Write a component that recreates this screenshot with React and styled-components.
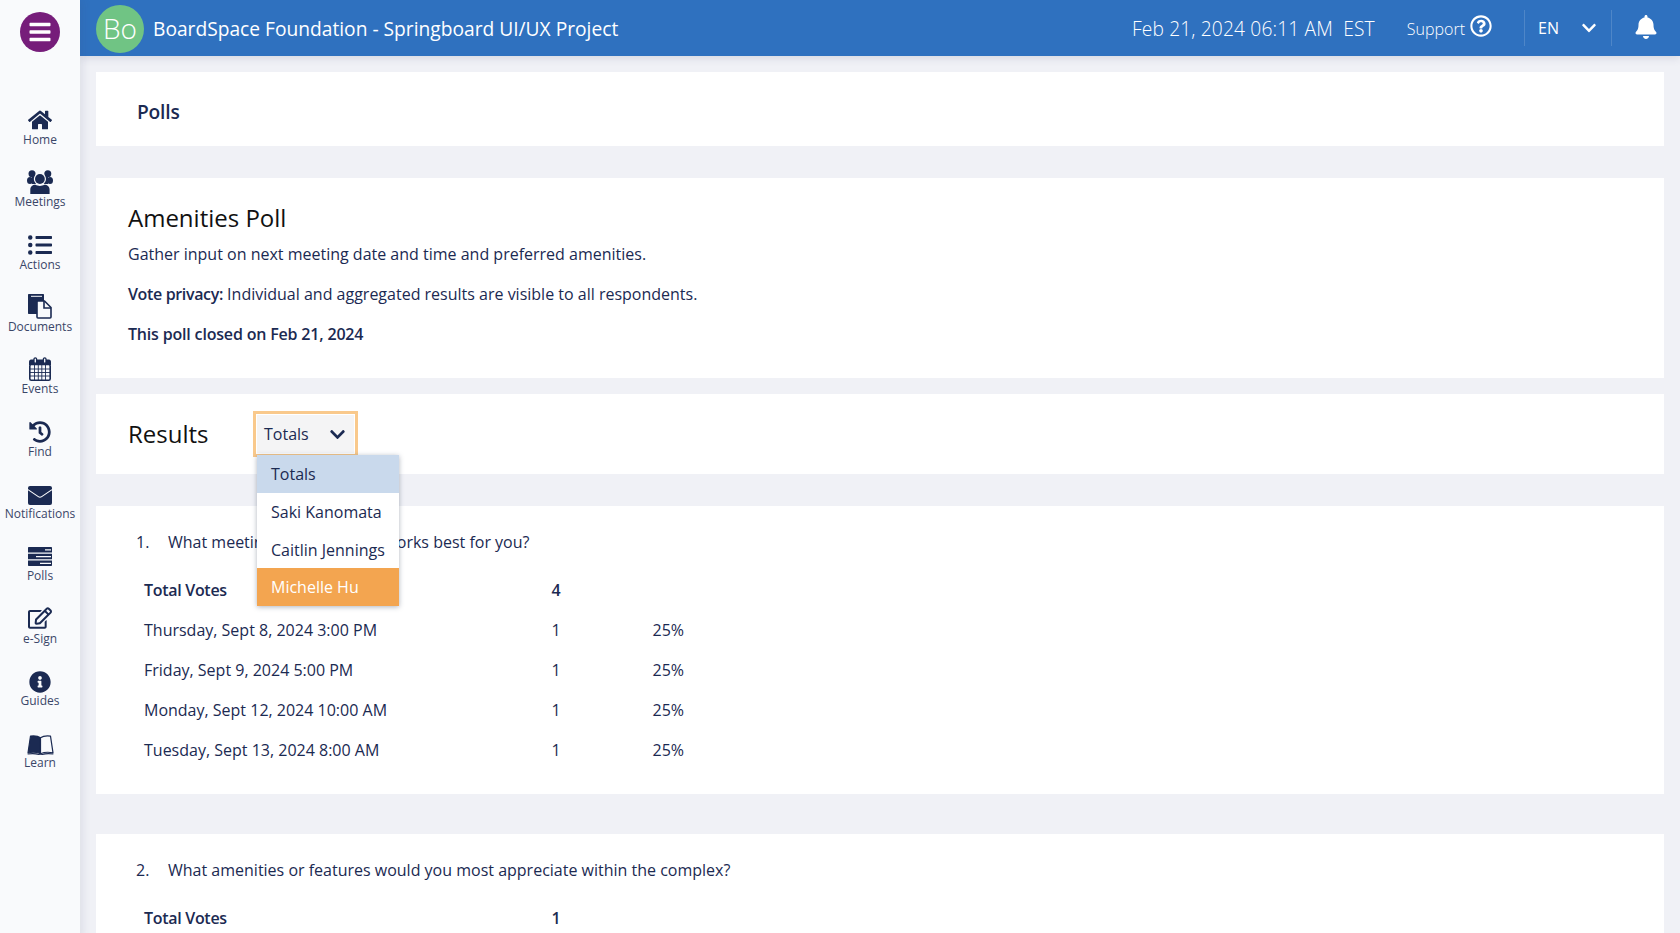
import React from "react";
import styled, { createGlobalStyle } from "styled-components";
import {
  FaHome, FaListUl, FaHistory, FaRegEdit,
  FaInfoCircle, FaBell, FaChevronDown, FaBars, FaRegQuestionCircle,
} from "react-icons/fa";

const Global = createGlobalStyle`
  html, body { margin: 0; padding: 0; height: 933px; overflow: hidden; background: #f0f1f6; }
  body { font-family: "Open Sans", "Liberation Sans", sans-serif; color: #1b2a52; }
  * { box-sizing: border-box; }
`;

const Page = styled.div`
  display: grid;
  grid-template-columns: 80px 1fr;
  width: 1680px;
  height: 933px;
  overflow: hidden;
`;

const Sidebar = styled.nav`
  background: #f9fafc;
  box-shadow: 3px 0 8px rgba(60, 70, 110, 0.1);
  z-index: 3;
  display: flex;
  flex-direction: column;
  align-items: center;
  padding-top: 12px;
`;

const Burger = styled.button`
  width: 40px;
  height: 40px;
  border: 0;
  border-radius: 50%;
  background: #761d7a;
  color: #fff;
  display: flex;
  align-items: center;
  justify-content: center;
  padding: 0;
  margin-bottom: 56px;
  font-size: 24px;
`;

const NavItem = styled.a`
  height: 62.35px;
  width: 80px;
  display: flex;
  flex-direction: column;
  align-items: center;
  font-size: 12px;
  line-height: 16px;
  color: #3a4668;
`;

const IconBox = styled.span`
  height: 24px;
  display: flex;
  align-items: flex-end;
  justify-content: center;
  padding-bottom: ${(p) => p.$lift || 0}px;
  color: #1b2a52;
  svg { display: block; }
`;

const Column = styled.div`
  display: flex;
  flex-direction: column;
  min-width: 0;
`;

const Header = styled.header`
  height: 56px;
  flex: none;
  background: #2f71bf;
  color: #fff;
  box-shadow: 0 2px 8px rgba(60, 70, 110, 0.15);
  z-index: 2;
  display: flex;
  align-items: center;
  padding: 0 22px 0 16px;
`;

const Avatar = styled.div`
  width: 48px;
  height: 48px;
  border-radius: 50%;
  background: #70c484;
  font-size: 28px;
  font-weight: 300;
  display: flex;
  align-items: center;
  justify-content: center;
  margin: 1px 9px 0 0;
  padding-bottom: 1px;
`;

const OrgTitle = styled.div`
  font-size: 19.2px;
  flex: 1;
  padding-top: 1px;
`;

const DateText = styled.div`
  font-size: 19.2px;
  font-weight: 300;
  white-space: pre;
  margin-right: 32px;
  letter-spacing: 0.15px;
`;

const Support = styled.div`
  font-size: 16px;
  font-weight: 300;
  display: flex;
  align-items: center;
  gap: 5px;
  margin-right: 32px;
  padding-top: 2px;
  svg { font-size: 22px; margin-top: -6px; }
`;

const Lang = styled.div`
  height: 36px;
  width: 88px;
  border-left: 1px solid rgba(255, 255, 255, 0.15);
  border-right: 1px solid rgba(255, 255, 255, 0.15);
  display: flex;
  align-items: center;
  justify-content: space-between;
  padding: 0 14px 0 13px;
  font-size: 16px;
  margin-right: 22px;
  svg { font-size: 16px; }
`;

const Bell = styled.div`
  display: flex;
  font-size: 24px;
  margin-top: -2px;
`;

const Main = styled.main`
  flex: 1;
  padding: 16px 16px 0;
  display: flex;
  flex-direction: column;
  min-height: 0;
`;

const Card = styled.section`
  background: #fff;
  flex: none;
  margin-bottom: ${(p) => p.$gap}px;
  height: ${(p) => (p.$height ? `${p.$height}px` : "auto")};
  padding: ${(p) => p.$pad};
`;

const PageTitle = styled.h1`
  margin: 0;
  font-size: 19.2px;
  line-height: 28px;
  font-weight: 600;
  letter-spacing: -0.2px;
  color: #1b2a52;
`;

const PollTitle = styled.h2`
  margin: 0 0 7px;
  font-size: 24px;
  line-height: 34px;
  font-weight: 400;
  color: #111;
`;

const Para = styled.p`
  margin: 0 0 16px;
  font-size: 16px;
  line-height: 24px;
  font-weight: ${(p) => (p.$strong ? 600 : 400)};
  letter-spacing: ${(p) => (p.$strong ? "-0.18px" : "normal")};
  b { font-weight: 600; letter-spacing: -0.35px; }
`;

const ResultsRow = styled.div`
  display: flex;
  align-items: center;
  height: 100%;
`;

const ResultsTitle = styled.h2`
  margin: 0;
  width: 125px;
  padding-bottom: 2px;
  font-size: 24px;
  font-weight: 400;
  color: #111;
`;

const SelectWrap = styled.div`
  position: relative;
`;

const SelectBox = styled.div`
  width: 105px;
  height: 46px;
  border: 3px solid #f9c98c;
  outline: 1px solid #fff;
  outline-offset: -4px;
  background: #f4f4f5;
  display: flex;
  align-items: center;
  justify-content: space-between;
  padding: 0 9px 0 8px;
  font-size: 16px;
  svg { font-size: 17px; }
`;

const Menu = styled.ul`
  position: absolute;
  top: 44px;
  left: 4px;
  width: 142px;
  margin: 0;
  padding: 0;
  list-style: none;
  background: #fff;
  box-shadow: 0 1px 5px rgba(30, 40, 70, 0.35);
  z-index: 5;
`;

const MenuItem = styled.li`
  height: 37.75px;
  line-height: 38.5px;
  padding-left: 14px;
  font-size: 16px;
  white-space: nowrap;
  background: ${(p) => (p.$active ? "#c9d9ec" : p.$hover ? "#f3a550" : "#fff")};
  color: ${(p) => (p.$hover ? "#fff" : "#1b2a52")};
`;

const Question = styled.div`
  display: flex;
  font-size: 16px;
  line-height: 24px;
  padding-left: 40px;
  margin-bottom: 16px;
`;

const QNum = styled.span`
  width: 32px;
  flex: none;
`;

const Row = styled.div`
  display: grid;
  grid-template-columns: 400px 24px 84.5px 60px;
  height: 40px;
  align-items: center;
  padding-left: 48px;
  font-size: 16px;
  font-weight: ${(p) => (p.$strong ? 600 : 400)};
  letter-spacing: ${(p) => (p.$strong ? "-0.3px" : "normal")};
`;

const Num = styled.span`
  text-align: center;
`;

const Pct = styled.span`
  grid-column: 4;
`;

const Meetings = () => (
  <svg width="26" height="24" viewBox="0 0 26 24" fill="currentColor">
    <circle cx="5" cy="3.7" r="3.5" />
    <circle cx="20.8" cy="3.7" r="3.5" />
    <ellipse cx="3" cy="10.5" rx="3" ry="3.6" />
    <ellipse cx="23" cy="10.5" rx="3" ry="3.6" />
    <path d="M5 6h16v8H5z" />
    <circle cx="12.9" cy="9" r="6.1" fill="#f9fafc" />
    <circle cx="12.9" cy="9" r="4.9" />
    <path d="M3.3 24v-4.5C3.3 16.5 6 14.6 8.5 14.8c1.2.7 2.8 1.2 4.4 1.2s3.2-.5 4.4-1.2c2.5-.2 5.3 1.7 5.3 4.7V24z" />
  </svg>
);

const Documents = () => (
  <svg width="24" height="25" viewBox="0 0 24 25">
    <path d="M1 0h14c.6 0 1 .4 1 1v19H1c-.6 0-1-.4-1-1V1c0-.6.4-1 1-1z" fill="currentColor" />
    <path d="M3 1.8h11v1H3z" fill="#f9fafc" />
    <path d="M10 7h6.5l6.5 6.5V23c0 .6-.4 1-1 1H10c-.6 0-1-.4-1-1V8c0-.6.4-1 1-1z" fill="#f9fafc" stroke="currentColor" strokeWidth="1.6" />
    <path d="M16 7v7h7" fill="none" stroke="currentColor" strokeWidth="1.6" />
  </svg>
);

const Events = () => (
  <svg width="22" height="24" viewBox="0 0 22 24" fill="none" stroke="currentColor">
    <path d="M2 2.5h18c1 0 2 1 2 2V8H0V4.500c0-1 1-2 2-2z" fill="currentColor" stroke="none" />
    <rect x="5" y=".8" width="2.6" height="5.400" rx="1.300" fill="#f9fafc" strokeWidth="1.300" />
    <rect x="14.400" y=".8" width="2.600" height="5.400" rx="1.300" fill="#f9fafc" strokeWidth="1.300" />
    <rect x=".8" y="7.500" width="20.400" height="15.700" rx="1.500" strokeWidth="1.600" />
    <path d="M5.500 8v15M9.300 8v15M12.800 8v15M16.500 8v15M1 12h20M1 15.500h20M1 19h20" strokeWidth=".9" />
  </svg>
);

const Envelope = () => (
  <svg width="24" height="19" viewBox="0 0 24 19">
    <rect width="24" height="19" rx="2" fill="currentColor" />
    <path d="M0 3.600l10.300 7c1 .7 2.400.7 3.400 0l10.300-7" fill="none" stroke="#f9fafc" strokeWidth="1.100" />
  </svg>
);

const Polls = () => (
  <svg width="24" height="19" viewBox="0 0 24 19">
    <path d="M1 0h22c.6 0 1 .4 1 1v4.600H0V1c0-.6.4-1 1-1zM0 6.700h24v5.600H0zM0 13.400h24V18c0 .6-.4 1-1 1H1c-.6 0-1-.4-1-1z" fill="currentColor" />
    <path d="M17 2.300h6v1.300h-6zM8 9h15v1.300H8zM12 15.700h11V17H12z" fill="#f9fafc" />
  </svg>
);

const Learn = () => (
  <svg width="27" height="20" viewBox="0 0 27 20">
    <path d="M13.500 2.800C11 1 7.500.6 3.500 1.100L1 17.800c4-.8 9-.6 12.500.9z" fill="currentColor" stroke="currentColor" strokeWidth="1.200" strokeLinejoin="round" />
    <path d="M13.500 2.800C16 1 19.500.6 23.500 1.100l2.500 16.700c-4-.8-9-.6-12.500.9z" fill="#f9fafc" stroke="currentColor" strokeWidth="1.200" strokeLinejoin="round" />
    <path d="M.6 19c4.500-.8 9-.5 12.900 1 3.900-1.500 8.400-1.800 12.900-1" fill="none" stroke="currentColor" strokeWidth="1.200" />
  </svg>
);

const nav = [
  ["Home", <FaHome size={24} />, 0],
  ["Meetings", <Meetings />, 0],
  ["Actions", <FaListUl size={24} />, 0],
  ["Documents", <Documents />, 0],
  ["Events", <Events />, 0],
  ["Find", <FaHistory size={22} />, 1],
  ["Notifications", <Envelope />, 1],
  ["Polls", <Polls />, 2],
  ["e-Sign", <FaRegEdit size={24} />, 1],
  ["Guides", <FaInfoCircle size={22} />, 0],
  ["Learn", <Learn />, 0],
];

const q1 = [
  "Thursday, Sept 8, 2024 3:00 PM",
  "Friday, Sept 9, 2024 5:00 PM",
  "Monday, Sept 12, 2024 10:00 AM",
  "Tuesday, Sept 13, 2024 8:00 AM",
];

export default function App() {
  return (
    <Page>
      <Global />
      <Sidebar>
        <Burger aria-label="Menu"><FaBars /></Burger>
        {nav.map(([label, icon, lift]) => (
          <NavItem key={label}><IconBox $lift={lift}>{icon}</IconBox>{label}</NavItem>
        ))}
      </Sidebar>
      <Column>
        <Header>
          <Avatar>Bo</Avatar>
          <OrgTitle>BoardSpace Foundation - Springboard UI/UX Project</OrgTitle>
          <DateText>Feb 21, 2024 06:11 AM  EST</DateText>
          <Support>Support <FaRegQuestionCircle /></Support>
          <Lang>EN <FaChevronDown /></Lang>
          <Bell><FaBell /></Bell>
        </Header>
        <Main>
          <Card $gap={32} $height={74} $pad="26px 41px 0">
            <PageTitle>Polls</PageTitle>
          </Card>
          <Card $gap={16} $height={200} $pad="23px 32px 0">
            <PollTitle>Amenities Poll</PollTitle>
            <Para>Gather input on next meeting date and time and preferred amenities.</Para>
            <Para><b>Vote privacy:</b> Individual and aggregated results are visible to all respondents.</Para>
            <Para $strong>This poll closed on Feb 21, 2024</Para>
          </Card>
          <Card $gap={32} $height={80} $pad="0 32px">
            <ResultsRow>
              <ResultsTitle>Results</ResultsTitle>
              <SelectWrap>
                <SelectBox>Totals <FaChevronDown /></SelectBox>
                <Menu>
                  <MenuItem $active>Totals</MenuItem>
                  <MenuItem>Saki Kanomata</MenuItem>
                  <MenuItem>Caitlin Jennings</MenuItem>
                  <MenuItem $hover>Michelle Hu</MenuItem>
                </Menu>
              </SelectWrap>
            </ResultsRow>
          </Card>
          <Card $gap={40} $height={288} $pad="24px 0 0">
            <Question><QNum>1.</QNum>What meeting date and time works best for you?</Question>
            <Row $strong><span>Total Votes</span><Num>4</Num></Row>
            {q1.map((t) => (
              <Row key={t}><span>{t}</span><Num>1</Num><Pct>25%</Pct></Row>
            ))}
          </Card>
          <Card $gap={0} $pad="24px 0 0">
            <Question><QNum>2.</QNum>What amenities or features would you most appreciate within the complex?</Question>
            <Row $strong><span>Total Votes</span><Num>1</Num></Row>
          </Card>
        </Main>
      </Column>
    </Page>
  );
}
